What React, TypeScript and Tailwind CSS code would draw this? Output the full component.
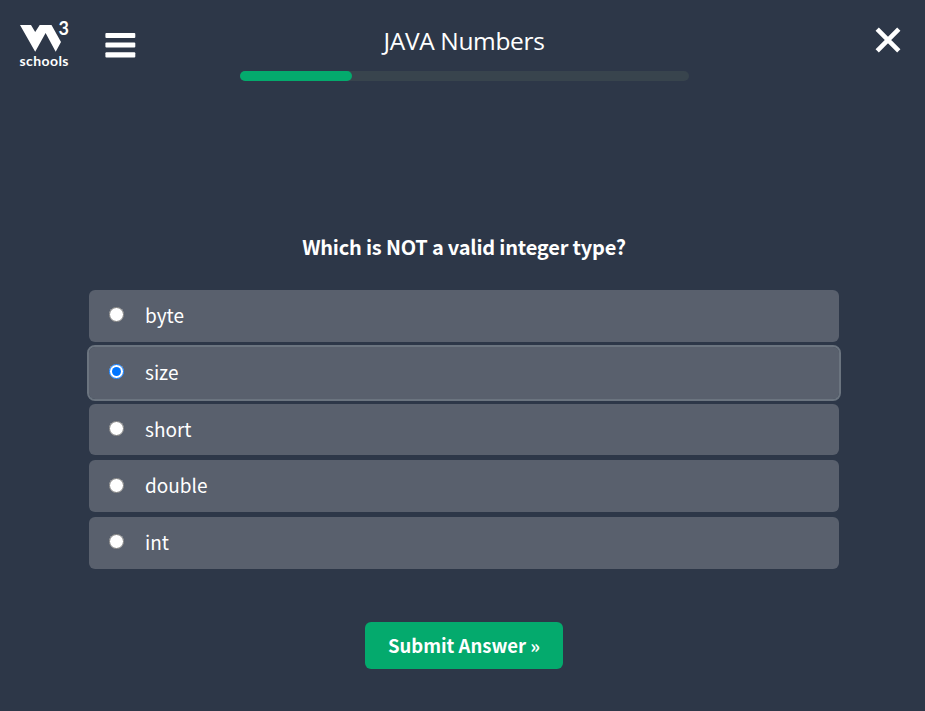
import { useState } from "react";

const options = ["byte", "size", "short", "double", "int"];

function Logo() {
  return (
    <svg width="56" height="58" viewBox="0 -6 56 58" fill="#fff" className="block">
      <path d="M2 7 H13 L17.2 14 L21.7 7 H33.5 L43 24 L37.7 33.7 L27.6 15 L17.2 33.7 Z" />
      <text x="40.5" y="17" fontSize="18" fontWeight="700" fontFamily="Lato, sans-serif">3</text>
      <text x="1.5" y="48" fontSize="14" fontWeight="700" fontFamily="Lato, sans-serif" textLength="49" lengthAdjust="spacing">schools</text>
    </svg>
  );
}

export default function App() {
  const [selected, setSelected] = useState("size");
  return (
    <div className="h-[711px] w-[925px] overflow-hidden bg-[#2d3748] font-['Noto_Sans_CJK_SC',sans-serif] text-white">
      <header className="flex h-[90px] justify-between">
        <div className="flex w-[240px] pl-[18px] pt-[12px]">
          <Logo />
          <button className="ml-[31px] mt-[21px] block h-[25px] w-[31px]" aria-label="Menu">
            <svg width="31" height="25" viewBox="0 0 31 25" fill="#fff" className="block">
              <rect x="0.4" y="0" width="29.9" height="5" rx="1" />
              <rect x="0.4" y="9.4" width="29.9" height="5.2" rx="1" />
              <rect x="0.4" y="19.2" width="29.9" height="5.4" rx="1" />
            </svg>
          </button>
        </div>
        <div className="flex w-[449px] flex-col items-center pt-[25px]">
          <h1 className="h-8 whitespace-nowrap pr-px font-['Open_Sans',sans-serif] text-[24.5px] leading-[32px] tracking-[-0.35px]">JAVA Numbers</h1>
          <div className="mt-[14px] h-[10px] w-full rounded-full bg-[#38444d]">
            <div className="h-full w-[112px] rounded-full bg-[#04aa6d]" />
          </div>
        </div>
        <div className="flex w-[236px] justify-end pr-6 pt-[27px]">
          <button className="size-[26px]" aria-label="Close">
            <svg width="26" height="26" viewBox="0 0 26 26" stroke="#fff" strokeWidth="4.6" className="block">
              <path d="M2.2 2.2 L23.8 23.8 M23.8 2.2 L2.2 23.8" />
            </svg>
          </button>
        </div>
      </header>
      <main className="flex flex-col items-center pl-[3px] pt-[141px]">
        <h2 className="h-8 whitespace-nowrap text-[20px] font-bold leading-[31px] tracking-[-0.2px]">Which is NOT a valid integer type?</h2>
        <div className="mt-[27px] flex w-[750px] flex-col gap-[5px]">
          {options.map((name) => (
            <label
              key={name}
              className={
                "flex h-[51.75px] cursor-pointer items-center rounded-[6px] bg-[#59606d] pl-[20px] " +
                (name === selected ? "outline-2 outline-[#6b747f]" : "")
              }
            >
              <input
                type="radio"
                name="answer"
                checked={name === selected}
                onChange={() => setSelected(name)}
                className="mb-[2px] size-[15px] shrink-0"
              />
              <span className="mb-[1.4px] ml-[21px] text-[19px] leading-7">{name}</span>
            </label>
          ))}
        </div>
        <button className="mt-[53px] h-[47px] w-[198px] whitespace-nowrap rounded-[6px] bg-[#04aa6d] text-[18.5px] font-bold leading-7">
          Submit Answer »
        </button>
      </main>
    </div>
  );
}
